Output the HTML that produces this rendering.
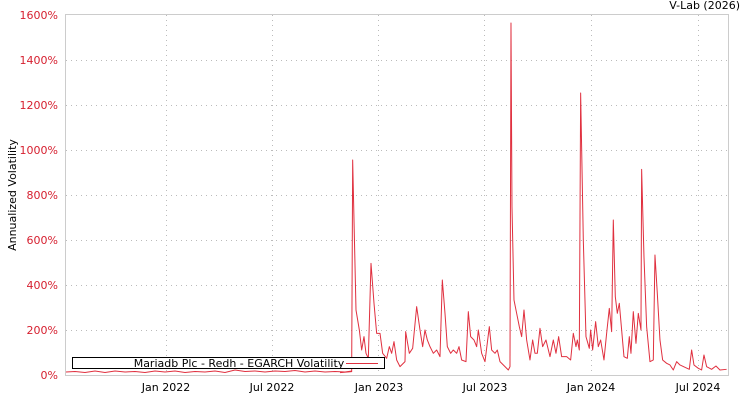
<!DOCTYPE html>
<html><head><meta charset="utf-8"><style>
body{margin:0;background:#fff;width:750px;height:400px;overflow:hidden}
text{font-family:"DejaVu Sans","Liberation Sans",sans-serif;font-size:11px}
</style></head><body>
<svg width="750" height="400" xmlns="http://www.w3.org/2000/svg">
<rect x="65.5" y="14.5" width="663" height="361" fill="#fff" stroke="#ccc"/>
<g stroke="#bbb" stroke-dasharray="1,4" stroke-width="1">
<line x1="66" x2="728" y1="60.5" y2="60.5"/><line x1="66" x2="728" y1="105.5" y2="105.5"/>
<line x1="66" x2="728" y1="150.5" y2="150.5"/><line x1="66" x2="728" y1="195.5" y2="195.5"/>
<line x1="66" x2="728" y1="240.5" y2="240.5"/><line x1="66" x2="728" y1="285.5" y2="285.5"/>
<line x1="66" x2="728" y1="330.5" y2="330.5"/>
<line x1="166.5" x2="166.5" y1="15" y2="375"/><line x1="272.5" x2="272.5" y1="15" y2="375"/>
<line x1="378.5" x2="378.5" y1="15" y2="375"/><line x1="484.5" x2="484.5" y1="15" y2="375"/>
<line x1="591.5" x2="591.5" y1="15" y2="375"/><line x1="698.5" x2="698.5" y1="15" y2="375"/>
</g>
<g fill="#d61f2f" text-anchor="end">
<text x="58" y="19">1600%</text><text x="58" y="64">1400%</text><text x="58" y="109">1200%</text>
<text x="58" y="154">1000%</text><text x="58" y="199">800%</text><text x="58" y="244">600%</text>
<text x="58" y="289">400%</text><text x="58" y="334">200%</text><text x="58" y="379">0%</text>
</g>
<g fill="#000" text-anchor="middle">
<text x="166" y="391">Jan 2022</text><text x="272" y="391">Jul 2022</text><text x="379" y="391">Jan 2023</text>
<text x="485" y="391">Jul 2023</text><text x="591" y="391">Jan 2024</text><text x="698" y="391">Jul 2024</text>
</g>
<text x="740" y="9" text-anchor="end" fill="#000">V-Lab (2026)</text>
<text transform="translate(16,195) rotate(-90)" text-anchor="middle" fill="#000">Annualized Volatility</text>
<polyline fill="none" stroke="#e0303f" stroke-width="1" points="66,372 75,371.5 85,372.5 95,371 105,372.5 115,371 125,372 135,371.5 145,372.5 155,371 165,372 175,371 185,372.5 195,371.5 205,372 215,371 225,372.5 235,370 245,371.5 255,371 265,372 275,371 285,371.5 295,370.5 305,372 315,371 325,372 335,371.5 345,372 352,371"/>
<g transform="translate(340,140) scale(0.3333)">
<polyline fill="none" stroke="#e0303f" stroke-width="3" stroke-linejoin="round" points="0,698 35,695 38,60 48,510 58,570 65,630 72,590 78,640 85,655 93,370 102,490 110,580 120,580 128,640 140,655 148,620 155,640 162,605 170,660 180,680 195,665 197,575 208,640 218,625 230,500 240,570 248,620 255,570 262,600 270,620 280,640 290,630 300,650 307,420 315,520 322,620 332,640 340,630 350,640 357,620 365,660 378,665 385,515 392,590 402,600 410,620 415,570 425,640 435,665 448,560 455,630 465,640 472,630 480,665 495,680 505,690 510,680 513,-351 516,200 522,480 530,520 538,560 545,590 552,510 560,600 570,660 578,600 585,640 592,640 600,565 608,620 618,600 630,650 640,600 648,640 656,590 665,650 680,650 692,660 700,580 708,620 712,600 718,630 722,-141 730,300 738,590 748,625 752,570 758,630 767,545 775,620 782,600 792,660 800,580 808,505 815,575 820,240 826,470 832,520 838,490 845,570 852,650 862,655 868,590 873,640 880,515 888,610 895,520 903,570 905,88 912,350 920,560 930,665 940,660 945,345 952,460 960,600 968,660 980,670 990,675 1000,690 1010,665 1020,675 1035,682 1048,688 1055,630 1062,675 1075,685 1085,690 1092,645 1100,680 1115,688 1128,678 1140,690 1160,688"/>
</g>
<rect x="72.5" y="357.5" width="312" height="11" fill="#fff" stroke="#000"/>
<text x="239" y="367" text-anchor="middle" fill="#000">Mariadb Plc - Redh - EGARCH Volatility</text>
<line x1="346" x2="378" y1="363.5" y2="363.5" stroke="#e0303f"/>
</svg>
</body></html>
